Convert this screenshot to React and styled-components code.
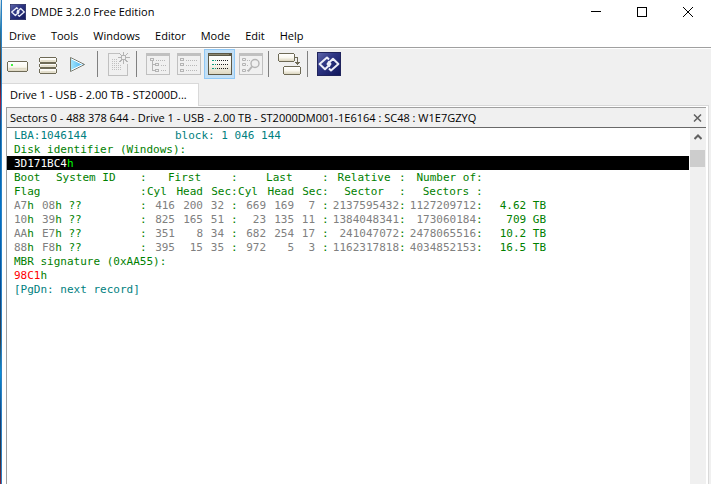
import {Fragment, useState} from "react";
import styled, {createGlobalStyle} from "styled-components";

const GlobalStyle = createGlobalStyle`
  * {
    box-sizing: border-box;
  }
  body {
    margin: 0;
    background-color: #ffffff;
    color: #000000;
    font: 11px/16px "Open Sans", "Noto Sans", sans-serif;
  }
  button {
    font: inherit;
    color: inherit;
    border: 0;
    padding: 0;
    background: none;
  }
`;

const Desktop = styled.div`
  display: flex;
  flex-direction: column;
  min-height: 100vh;
  padding-left: 1px;
  background: linear-gradient(#d8e4ea, #247aa8 6%, #59483a 11%, #2b2b35 16%, #a51c3c 21%, #075493 26%, #0674c8 43%, #064b91 60%, #3b3d40 70%, #0a8ed8 77%, #17407b 86%, #34343c 94%, #8a2038);
`;
const Window = styled.div`
  display: flex;
  flex-direction: column;
  flex: 1;
  border-left: 1px solid #2a82c4;
  background-color: #f0f0f0;
`;
const TitleBar = styled.header`
  display: flex;
  align-items: center;
  gap: 5px;
  height: 24px;
  padding-left: 8px;
  background-color: #ffffff;
`;
const Title = styled.h1`
  flex: 1;
  margin: 0;
  font-size: 11px;
  font-weight: 400;
  white-space: nowrap;
`;
const WindowButtons = styled.div`
  display: flex;
  height: 24px;
`;
const WindowButton = styled.button`
  display: flex;
  align-items: center;
  justify-content: center;
  width: 46px;
`;
const MenuBar = styled.nav`
  display: flex;
  gap: 15px;
  height: 24px;
  padding: 2px 7px 0;
  background-color: #ffffff;
  border-bottom: 1px solid #a0a0a0;
`;
const MenuItem = styled.button`
  height: 20px;
`;
const ToolBar = styled.div`
  display: flex;
  height: 35px;
  border-top: 1px solid #ffffff;
`;
const ToolButton = styled.button`
  display: flex;
  align-items: center;
  width: 31px;
  height: 30px;
  padding-left: 3px;
  border: 1px solid ${(props) => props.$active ? '#90c8f6' : 'transparent'};
  background-color: ${(props) => props.$active ? '#c2dff5' : 'transparent'};
`;
const Separator = styled.span`
  width: 8px;
  height: 26px;
  margin-top: 2px;
  padding-left: 2px;

  &::before {
    content: "";
    display: block;
    width: 1px;
    height: 26px;
    background-color: #808080;
  }
`;
const TabStrip = styled.div`
  display: flex;
  height: 23px;
  margin-right: 2px;
`;
const Tab = styled.button`
  padding: 0 11px 1px 8px;
  background-color: #ffffff;
  border-top: 1px solid #d9d9d9;
  border-right: 1px solid #d9d9d9;
  white-space: nowrap;
`;
const TabRest = styled.div`
  flex: 1;
  border-bottom: 1px solid #d9d9d9;
`;
const TabPage = styled.main`
  display: flex;
  flex: 1;
  margin-right: 2px;
  padding: 1px 2px 0 4px;
  background-color: #ffffff;
  border-right: 1px solid #d9d9d9;
`;
const Panel = styled.section`
  display: flex;
  flex-direction: column;
  flex: 1;
  border-top: 1px solid #a0a0a0;
  border-left: 1px solid #a0a0a0;
`;
const PanelHeader = styled.div`
  display: flex;
  align-items: center;
  justify-content: space-between;
  height: 20px;
  padding: 0 3px;
  background-color: #f0f0f0;
  border-bottom: 1px solid #696969;
`;
const PanelTitle = styled.h2`
  margin: 0;
  font-size: 11px;
  font-weight: 400;
  white-space: nowrap;
`;
const PanelBody = styled.div`
  display: flex;
  flex: 1;
`;
const Record = styled.div`
  flex: 1;
  margin-right: 1px;
  font: 11px/12px "DejaVu Sans Mono", monospace;
  color: #008000;
  white-space: pre;
`;
const Line = styled.div`
  display: flex;
  height: 14px;
  padding: 2px 0 0 7px;
  color: ${(props) => props.$color || '#008000'};
  background-color: ${(props) => props.$selected ? '#000000' : 'transparent'};
`;
const Part = styled.span`
  color: ${(props) => props.$color};
`;
const LbaField = styled.span`
  width: 161px;
`;
const PartitionTable = styled.table`
  width: 532px;
  margin-left: 7px;
  table-layout: fixed;
  border-collapse: collapse;

  tr {
    height: 14px;
  }
`;
const Col = styled.col`
  width: ${(props) => props.$width}px;
`;
const Cell = styled.td`
  padding: 2px ${(props) => props.$padRight || 0}px 0 ${(props) => props.$padLeft || 0}px;
  color: ${(props) => props.$value ? '#808080' : '#008000'};
  font-weight: 400;
  text-align: ${(props) => props.$align || 'left'};
`;
const ScrollBar = styled.div`
  width: 16px;
  background-color: #f0f0f0;
`;
const ScrollArrow = styled.button`
  display: flex;
  align-items: center;
  justify-content: center;
  width: 15px;
  height: 22px;
  padding-bottom: 4px;
`;
const ScrollThumb = styled.div`
  width: 15px;
  height: 17px;
  background-color: #cdcdcd;
`;

function Logo({size}) {
    return <svg width={size} height={size} viewBox="0 0 24 24" aria-hidden="true">
        <defs>
            <linearGradient id="navy" x1="0" y1="0" x2="1" y2="1">
                <stop offset="0" stopColor="#6068ac"/>
                <stop offset=".4" stopColor="#2e3684"/>
                <stop offset="1" stopColor="#10165a"/>
            </linearGradient>
        </defs>
        <rect x=".5" y=".5" width="23" height="23" fill="url(#navy)" stroke="#20245c"/>
        <g fill="none" stroke="#eceef8" strokeWidth="2" strokeLinejoin="round">
            <path d="M12 16.5 14 18.5 21.4 12 16 6.8 10.5 12 13 14.5"/>
            <path d="M12 7.500 10 5.500 2.600 12 8 17.200 13.500 12 11 9.500"/>
        </g>
    </svg>
}

function Pic({children, smooth}) {
    return <svg width="24" height="24" viewBox="0 0 24 24" fill="none" shapeRendering={smooth ? 'auto' : 'crispEdges'} aria-hidden="true">
        <defs>
            <linearGradient id="cream" x1="0" y1="0" x2="0" y2="1">
                <stop offset="0" stopColor="#ffffff"/>
                <stop offset=".5" stopColor="#faf8f0"/>
                <stop offset="1" stopColor="#dcd6bf"/>
            </linearGradient>
            <linearGradient id="sky" x1="0" y1="0" x2="1" y2="0">
                <stop offset="0" stopColor="#a7e8ff"/>
                <stop offset="1" stopColor="#34a8ee"/>
            </linearGradient>
        </defs>
        {children}
    </svg>
}

function Slab({x, y, width, height}) {
    return <>
        <path d={`M${x + 1} ${y + .5}h${width - 2}M${x + 1} ${y + height - .5}h${width - 2}M${x + .5} ${y + 1}v${height - 2}M${x + width - .5} ${y + 1}v${height - 2}`}
              stroke="#6e6a56"/>
        <rect x={x + 1} y={y + 1} width={width - 2} height={height - 2} fill="url(#cream)"/>
    </>
}

function DriveIcon() {
    return <Pic>
        <Slab x={1} y={9} width={21} height={11}/>
        <path d="M3 16.5h17" stroke="#e0dac6"/>
        <rect x="5" y="12" width="2" height="2" fill="#44f044"/>
    </Pic>
}

function StackIcon() {
    return <Pic>
        <Slab x={2} y={5} width={18} height={6}/>
        <Slab x={2} y={11} width={18} height={5}/>
        <Slab x={2} y={16} width={18} height={6}/>
        <path d="M4 8.5h14M4 13.5h14M4 19.5h14" stroke="#e4dfce"/>
    </Pic>
}

function PlayIcon() {
    return <Pic smooth>
        <path d="M2.5 5.5 16.5 12.5 2.5 19.5z" fill="url(#sky)" stroke="#7d7a6c" strokeLinejoin="round"/>
        <path d="M3.5 7 14.5 12.5 3.5 18" stroke="#ffffff"/>
    </Pic>
}

function NewIcon() {
    return <Pic>
        <path d="M12 1.5H1.5v22h19V12" stroke="#c0c0c0"/>
        <path d="M5 7.5h6M5 9.5h6M5 11.5h7M5 13.5h10M5 15.5h10M5 17.5h10" stroke="#c0c0c0" strokeDasharray="1 1"/>
        <path d="M16.5 0v4M16.5 8v4M11 5.5h4M18 5.5h5M12.5 1.5l3 3M20.5 1.5l-3 3M12.5 10l3-3M20.5 10l-3-3" stroke="#b4b4b4"/>
        <rect x="14.5" y="3.5" width="4" height="4" stroke="#b4b4b4"/>
    </Pic>
}

function GreyFrame() {
    return <>
        <rect x=".5" y="1.5" width="23" height="21" stroke="#c0c0c0"/>
        <rect x="0" y="1" width="24" height="3" fill="#c0c0c0"/>
    </>
}

function TreeIcon() {
    return <Pic>
        <GreyFrame/>
        <path d="M4.5 6.5h3v2h-3zM9.5 11.5h3v2h-3zM9.5 17.5h3v2h-3zM6.5 9v9.5h3M6.5 12.5h3" stroke="#b4b4b4"/>
        <path d="M10 8.5h9M15 13.5h6M15 18.5h6" stroke="#b8b8b8" strokeDasharray="1 1"/>
    </Pic>
}

function ListIcon() {
    return <Pic>
        <GreyFrame/>
        <path d="M3.5 6.5h3v2h-3zM3.5 11.5h3v2h-3zM3.5 17.5h3v2h-3z" stroke="#b4b4b4"/>
        <path d="M9 8.5h11M9 13.5h11M9 18.5h11" stroke="#b8b8b8" strokeDasharray="1 1"/>
    </Pic>
}

function HexIcon() {
    return <Pic>
        <rect x=".5" y="1.5" width="23" height="21" fill="url(#cream)" stroke="#5c5846"/>
        <rect x="0" y="1" width="24" height="3" fill="#5c5846"/>
        <rect x="1" y="2" width="20" height="1" fill="#8b866e"/>
        <path d="M4 8.5h4M4 12.5h4M4 16.5h4" stroke="#109c80" strokeDasharray="2 1"/>
        <path d="M9 8.5h11M9 12.5h11M9 16.5h11" stroke="#202020" strokeDasharray="1 1"/>
    </Pic>
}

function FindIcon() {
    return <Pic smooth>
        <GreyFrame/>
        <path d="M3.5 6.5h3v2h-3zM3.5 11.5h3v2h-3zM3.5 17.5h3v2h-3z" stroke="#b4b4b4"/>
        <path d="M8 8.5h3M8 13.5h2M8 18.5h2" stroke="#b8b8b8" strokeDasharray="1 1"/>
        <circle cx="16" cy="11.5" r="4" stroke="#b4b4b4" strokeWidth="1.4"/>
        <path d="m13 14.5-4 5" stroke="#b4b4b4" strokeWidth="2"/>
    </Pic>
}

function CopyIcon() {
    return <Pic>
        <Slab x={0} y={1} width={17} height={9}/>
        <Slab x={5} y={14} width={18} height={9}/>
        <path d="M17 5.5h2.5V13M17 10.5h5M18 11.5h3" stroke="#6e6a56"/>
    </Pic>
}

const MENU = ['Drive', 'Tools', 'Windows', 'Editor', 'Mode', 'Edit', 'Help'];

const TOOLS = [
    [['Select drive', DriveIcon], ['Partitions', StackIcon], ['Continue', PlayIcon]],
    [['New search', NewIcon]],
    [['Tree view', TreeIcon], ['File list', ListIcon], ['Disk editor', HexIcon], ['Find', FindIcon]],
    [['Copy sectors', CopyIcon]],
];

// 7px per character
const COLUMNS = [28, 98, 7, 28, 28, 28, 7, 28, 28, 28, 7, 70, 7, 70, 7, 63];

const PARTITIONS = [
    {flag: 'A7', id: '08', first: [416, 200, 32], last: [669, 169, 7], relative: 2137595432, sectors: 1127209712, size: '4.62 TB'},
    {flag: '10', id: '39', first: [825, 165, 51], last: [23, 135, 11], relative: 1384048341, sectors: 173060184, size: '709 GB'},
    {flag: 'AA', id: 'E7', first: [351, 8, 34], last: [682, 254, 17], relative: 241047072, sectors: 2478065516, size: '10.2 TB'},
    {flag: '88', id: 'F8', first: [395, 15, 35], last: [972, 5, 3], relative: 1162317818, sectors: 4034852153, size: '16.5 TB'},
];

function Chs({value}) {
    return <>
        <Cell $value $align="right">{value[0]}</Cell>
        <Cell $value $align="right">{value[1]}</Cell>
        <Cell $value $align="right" $padRight={7}>{value[2]}</Cell>
    </>
}

function ChsHead() {
    return <>
        <Cell as="th">Cyl</Cell>
        <Cell as="th" $align="right">Head</Cell>
        <Cell as="th" $align="right">Sec</Cell>
    </>
}

function Partitions() {
    return <PartitionTable>
        <colgroup>
            {COLUMNS.map((width, i) => <Col key={i} $width={width}/>)}
        </colgroup>
        <thead>
            <tr>
                <Cell as="th">Boot</Cell>
                <Cell as="th" $padLeft={14}>System ID</Cell>
                <Cell>:</Cell>
                <Cell as="th" colSpan="3" $padLeft={21}>First</Cell>
                <Cell>:</Cell>
                <Cell as="th" colSpan="3" $padLeft={28}>Last</Cell>
                <Cell>:</Cell>
                <Cell as="th" $align="center">Relative</Cell>
                <Cell>:</Cell>
                <Cell as="th" $align="right">Number of</Cell>
                <Cell>:</Cell>
                <Cell/>
            </tr>
            <tr>
                <Cell as="th">Flag</Cell>
                <Cell/>
                <Cell>:</Cell>
                <ChsHead/>
                <Cell>:</Cell>
                <ChsHead/>
                <Cell>:</Cell>
                <Cell as="th" $align="center">Sector</Cell>
                <Cell>:</Cell>
                <Cell as="th" $align="right" $padRight={7}>Sectors</Cell>
                <Cell>:</Cell>
                <Cell/>
            </tr>
        </thead>
        <tbody>
            {PARTITIONS.map((part) => <tr key={part.flag}>
                <Cell><Part $color="#808080">{part.flag}</Part>h</Cell>
                <Cell><Part $color="#808080">{part.id}</Part>h ??</Cell>
                <Cell>:</Cell>
                <Chs value={part.first}/>
                <Cell>:</Cell>
                <Chs value={part.last}/>
                <Cell>:</Cell>
                <Cell $value $align="right">{part.relative}</Cell>
                <Cell>:</Cell>
                <Cell $value $align="right">{part.sectors}</Cell>
                <Cell>:</Cell>
                <Cell $align="right">{part.size}</Cell>
            </tr>)}
        </tbody>
    </PartitionTable>
}

export default function App() {
    const [tool, setTool] = useState('Disk editor');

    return <Desktop>
        <GlobalStyle/>
        <Window>
            <TitleBar>
                <Logo size={16}/>
                <Title>DMDE 3.2.0 Free Edition</Title>
                <WindowButtons>
                    <WindowButton aria-label="Minimize">
                        <svg width="10" height="10" stroke="#000000" shapeRendering="crispEdges"><path d="M0 4.5h10"/></svg>
                    </WindowButton>
                    <WindowButton aria-label="Maximize">
                        <svg width="10" height="10" stroke="#000000" fill="none" shapeRendering="crispEdges"><path d="M.5.5h9v9h-9z"/></svg>
                    </WindowButton>
                    <WindowButton aria-label="Close">
                        <svg width="10" height="10" stroke="#000000"><path d="m0 0 10 10M10 0 0 10"/></svg>
                    </WindowButton>
                </WindowButtons>
            </TitleBar>
            <MenuBar>
                {MENU.map((item) => <MenuItem key={item}>{item}</MenuItem>)}
            </MenuBar>
            <ToolBar>
                {TOOLS.map((group, i) => <Fragment key={i}>
                    {group.map(([name, Icon]) => <ToolButton key={name} aria-label={name} $active={tool === name}
                                                             onClick={() => setTool(name)}>
                        <Icon/>
                    </ToolButton>)}
                    <Separator/>
                </Fragment>)}
                <ToolButton aria-label="About"><Logo size={24}/></ToolButton>
            </ToolBar>
            <TabStrip>
                <Tab>Drive 1 - USB - 2.00 TB - ST2000D...</Tab>
                <TabRest/>
            </TabStrip>
            <TabPage>
                <Panel>
                    <PanelHeader>
                        <PanelTitle>Sectors 0 - 488 378 644 - Drive 1 - USB - 2.00 TB - ST2000DM001-1E6164 : SC48 : W1E7GZYQ</PanelTitle>
                        <button aria-label="Close panel">
                            <svg width="10" height="8" viewBox="0 0 10 8" stroke="#606060" strokeWidth="1.5"><path d="m1 .5 7 7M8 .5l-7 7"/></svg>
                        </button>
                    </PanelHeader>
                    <PanelBody>
                        <Record>
                            <Line $color="#008080"><LbaField>LBA:1046144</LbaField>block: 1 046 144</Line>
                            <Line>Disk identifier (Windows):</Line>
                            <Line $selected $color="#00ff00"><Part $color="#ffffff">3D171BC4</Part>h</Line>
                            <Partitions/>
                            <Line>MBR signature (0xAA55):</Line>
                            <Line><Part $color="#ff0000">98C1</Part>h</Line>
                            <Line $color="#008080">[PgDn: next record]</Line>
                        </Record>
                        <ScrollBar>
                            <ScrollArrow aria-label="Scroll up">
                                <svg width="8" height="6" viewBox="0 0 8 6" fill="none" stroke="#606060" strokeWidth="2"><path d="M.5 5 4 1.5 7.5 5"/></svg>
                            </ScrollArrow>
                            <ScrollThumb/>
                        </ScrollBar>
                    </PanelBody>
                </Panel>
            </TabPage>
        </Window>
    </Desktop>
}
